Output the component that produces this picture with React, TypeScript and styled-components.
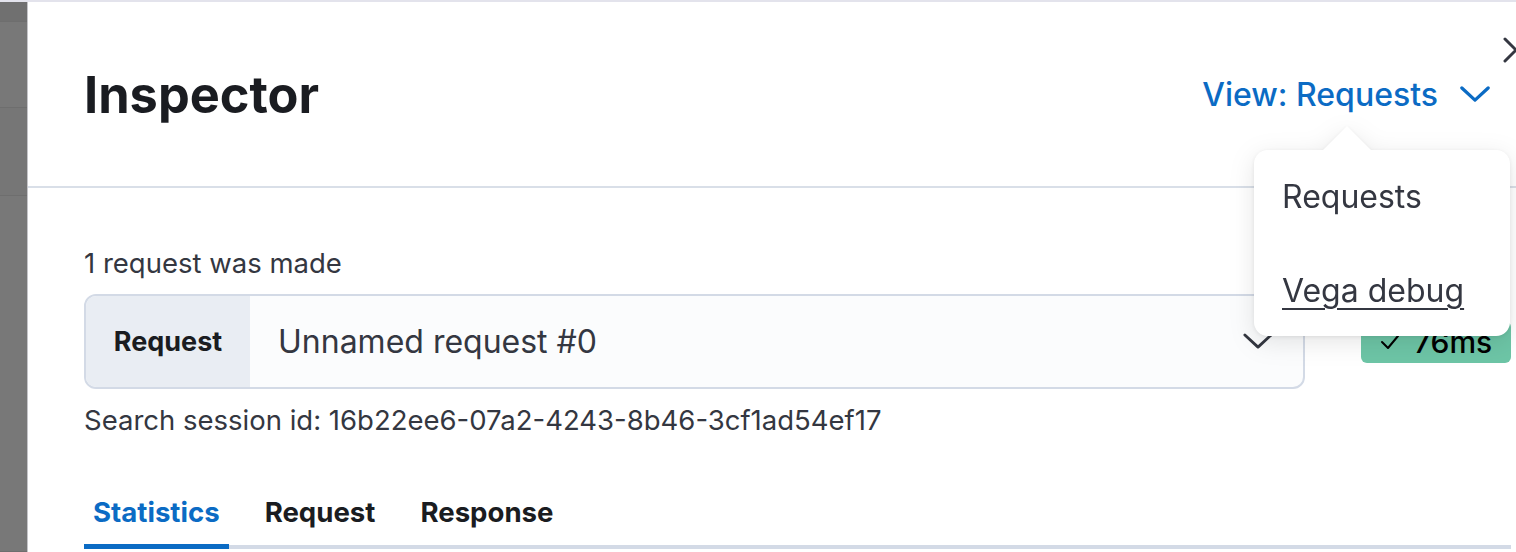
import React from "react";
import styled, { createGlobalStyle } from "styled-components";

const Global = createGlobalStyle`
  html, body { margin: 0; padding: 0; background: #fff; }
  body { font-family: Inter, "Noto Sans", sans-serif; color: #343741; }
  * { box-sizing: border-box; }
`;

const Page = styled.div`
  position: relative;
  display: flex;
  width: 1516px;
  height: 552px;
  overflow: hidden;
  border-top: 2px solid #e3e3ec;
`;

const Backdrop = styled.div`
  width: 28px;
  flex: none;
  display: grid;
  grid-template-rows: 20px 86px 88px 1fr;
  background: #787878;
  border-right: 1px solid #c4c4c8;
`;

const BackdropBand = styled.div<{ $shade: string }>`
  background: ${(p) => p.$shade};
  border-bottom: 1px solid #6e6e6e;
`;

const Flyout = styled.div`
  flex: 1;
  display: flex;
  flex-direction: column;
  background: #fff;
`;

const Header = styled.header`
  height: 186px;
  flex: none;
  display: flex;
  align-items: center;
  justify-content: space-between;
  padding: 0 28px 0 56px;
  border-bottom: 2px solid #d9dfe8;
`;

const Title = styled.h1`
  margin: 0;
  font-size: 50.5px;
  font-weight: 700;
  color: #1a1c21;
`;

const ViewButton = styled.button`
  display: flex;
  align-items: center;
  gap: 22px;
  border: 0;
  background: none;
  padding: 0;
  font-family: inherit;
  font-size: 32px;
  font-weight: 500;
  color: #0b6bc4;
  cursor: pointer;
`;

const CloseButton = styled.button`
  position: absolute;
  top: 34px;
  right: -14px;
  width: 28px;
  height: 28px;
  border: 0;
  background: none;
  padding: 0;
  color: #343741;
`;

const Body = styled.div`
  display: flex;
  flex-direction: column;
  padding: 58px 7px 0 56px;
`;

const Count = styled.p`
  margin: 0 0 14px;
  font-size: 27.5px;
  line-height: 34px;
  color: #343741;
`;

const RequestRow = styled.div`
  display: flex;
  align-items: center;
  gap: 56px;
`;

const Combo = styled.div`
  width: 1221px;
  height: 95px;
  display: flex;
  border: 2px solid #d3dae6;
  border-radius: 12px;
  overflow: hidden;
  background: #fbfcfd;
`;

const Prepend = styled.div`
  width: 164px;
  flex: none;
  display: flex;
  align-items: center;
  justify-content: center;
  background: #e9edf3;
  font-size: 27px;
  font-weight: 700;
  color: #1a1c21;
`;

const ComboValue = styled.div`
  flex: 1;
  display: flex;
  align-items: center;
  justify-content: space-between;
  padding: 0 30px 0 28px;
  font-size: 32px;
  color: #343741;
`;

const Badge = styled.div`
  width: 150px;
  height: 42px;
  display: flex;
  align-items: center;
  justify-content: center;
  gap: 14px;
  border-radius: 6px;
  background: #6dc5a6;
  font-size: 30px;
  font-weight: 500;
  color: #000;
`;

const SessionId = styled.p`
  margin: 14px 0 0;
  font-size: 27.5px;
  line-height: 34px;
  color: #343741;
`;

const Tabs = styled.div`
  margin-top: 58px;
  display: flex;
  border-bottom: 4px solid #d3dae6;
`;

const Tab = styled.div<{ $active?: boolean }>`
  padding: 0 9px 15px;
  margin-right: 27px;
  margin-bottom: -4px;
  font-size: 27.6px;
  font-weight: 700;
  color: ${(p) => (p.$active ? "#0b6bc4" : "#1a1c21")};
  border-bottom: 5px solid ${(p) => (p.$active ? "#0b6bc4" : "transparent")};
`;

const Popover = styled.div`
  position: absolute;
  left: 1254px;
  top: 148px;
  width: 256px;
  height: 186px;
  display: flex;
  flex-direction: column;
  gap: 56px;
  padding: 28px 28px 0;
  background: #fff;
  border-radius: 14px;
  filter: drop-shadow(0 1px 2px rgba(0, 0, 0, 0.08)) drop-shadow(0 6px 12px rgba(0, 0, 0, 0.1));
  &::before {
    content: "";
    position: absolute;
    left: 68px;
    top: -24px;
    width: 50px;
    height: 25px;
    background: #fff;
    clip-path: polygon(50% 0, 100% 100%, 0 100%);
  }
`;

const MenuItem = styled.div<{ $underline?: boolean }>`
  font-size: 32px;
  line-height: 38px;
  color: #343741;
  text-decoration: ${(p) => (p.$underline ? "underline" : "none")};
  text-underline-offset: 6px;
  text-decoration-thickness: 2px;
`;

const Chevron = ({ size, color, width = 3 }: { size: number; color: string; width?: number }) => (
  <svg width={size} height={size / 2 + 2} viewBox="0 0 32 18" fill="none">
    <path d="M2 2 L16 15 L30 2" stroke={color} strokeWidth={width} strokeLinecap="round" strokeLinejoin="round" />
  </svg>
);

export default function App() {
  return (
    <>
      <Global />
      <Page>
        <Backdrop>
          <BackdropBand $shade="#707070" />
          <BackdropBand $shade="#787878" />
          <BackdropBand $shade="#767676" />
          <BackdropBand $shade="#787878" />
        </Backdrop>
        <Flyout>
          <Header>
            <Title>Inspector</Title>
            <ViewButton>
              View: Requests
              <Chevron size={30} color="#0b6bc4" width={3.5} />
            </ViewButton>
          </Header>
          <Body>
            <Count>1 request was made</Count>
            <RequestRow>
              <Combo>
                <Prepend>Request</Prepend>
                <ComboValue>
                  Unnamed request #0
                  <Chevron size={30} color="#343741" width={3} />
                </ComboValue>
              </Combo>
              <Badge>
                <svg width="20" height="16" viewBox="0 0 20 16" fill="none">
                  <path d="M2 8 L8 14 L18 2" stroke="#000" strokeWidth="2" strokeLinecap="round" strokeLinejoin="round" />
                </svg>
                76ms
              </Badge>
            </RequestRow>
            <SessionId>Search session id: 16b22ee6-07a2-4243-8b46-3cf1ad54ef17</SessionId>
            <Tabs>
              <Tab $active>Statistics</Tab>
              <Tab>Request</Tab>
              <Tab>Response</Tab>
            </Tabs>
          </Body>
        </Flyout>
        <CloseButton aria-label="Close">
          <svg width="28" height="28" viewBox="0 0 28 28" fill="none">
            <path d="M3 3 L25 25 M25 3 L3 25" stroke="#343741" strokeWidth="3" strokeLinecap="round" />
          </svg>
        </CloseButton>
        <Popover>
          <MenuItem>Requests</MenuItem>
          <MenuItem $underline>Vega debug</MenuItem>
        </Popover>
      </Page>
    </>
  );
}
